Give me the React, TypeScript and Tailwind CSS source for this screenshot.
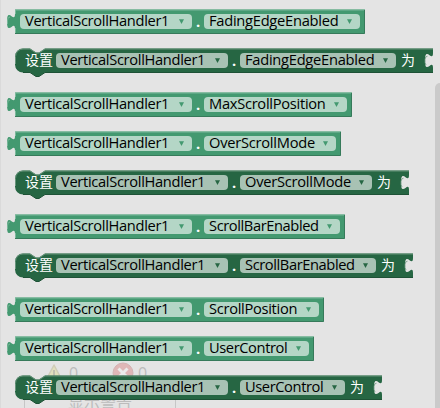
import React from "react";

type Row = { set: boolean; name: string; width: number; mt: string; fit: string; track: string };

const rows: Row[] = [
  { set: false, name: "FadingEdgeEnabled", width: 350, mt: "mt-[9px]", fit: "w-[156px]", track: "tracking-[-0.26px]" },
  { set: true, name: "FadingEdgeEnabled", width: 418, mt: "mt-[14px]", fit: "w-[156px]", track: "tracking-[-0.26px]" },
  { set: false, name: "MaxScrollPosition", width: 337, mt: "mt-[19px]", fit: "w-[143px]", track: "tracking-[-0.28px]" },
  { set: false, name: "OverScrollMode", width: 326, mt: "mt-[14px]", fit: "w-[132px]", track: "tracking-[-0.25px]" },
  { set: true, name: "OverScrollMode", width: 394, mt: "mt-[14px]", fit: "w-[132px]", track: "tracking-[-0.25px]" },
  { set: false, name: "ScrollBarEnabled", width: 330, mt: "mt-[19px]", fit: "w-[136px]", track: "tracking-[-0.4px]" },
  { set: true, name: "ScrollBarEnabled", width: 398, mt: "mt-[14px]", fit: "w-[136px]", track: "tracking-[-0.4px]" },
  { set: false, name: "ScrollPosition", width: 309, mt: "mt-[19px]", fit: "w-[115px]", track: "tracking-[-0.3px]" },
  { set: false, name: "UserControl", width: 299, mt: "mt-[14px]", fit: "w-[105px]", track: "tracking-[-0.4px]" },
  { set: true, name: "UserControl", width: 367, mt: "mt-[14px]", fit: "w-[105px]", track: "tracking-[-0.4px]" },
];

function Shape({ set, width }: { set: boolean; width: number }) {
  const w = width;
  const tab = "v4.5 c0 10 -8 -8 -8 7.5 s8 -2.5 8 7.5";
  const outline = set
    ? `M0 8.5 A8 8 0 0 1 8 .5 H15 l6 4 h3 l6 -4 H${w} ${tab} V24.5 H30 l-6 4 h-3 l-6 -4 H8 A8 8 0 0 1 0 16.5 Z`
    : `M0 .5 ${tab} V24.5 H${w} V.5 Z`;
  return (
    <svg className="absolute left-0 top-0 overflow-visible" width={w} height="25">
      <path d={outline} fill={set ? "#266643" : "#439970"} />
      {set ? (
        <>
          <path d={`M.5 16 V8.5 A7.5 7.5 0 0 1 8 1 H15 l6 4 h3 l6 -4 H${w}`} fill="none" stroke="#67947b" />
          <path d={`M8 24.5 H15 l6 4 h3 l6 -4 H${w}`} fill="none" stroke="#1e5236" />
          <path d={`M${w - 7} 17 q-1.5 -2 -1 -5.5 q.3 -3.5 2.5 -3.3`} fill="none" stroke="#67947b" strokeWidth=".8" />
        </>
      ) : (
        <>
          <path d={`M.5 24 V19 M.5 5 V1 H${w} M-7.5 15 Q-8 8 -5 8`} fill="none" stroke="#7bb89b" />
          <path d={`M0 24.5 H${w - 0.5} V1`} fill="none" stroke="#367a5a" />
        </>
      )}
    </svg>
  );
}

function Field({ text, set, size, track }: { text: string; set: boolean; size: string; track: string }) {
  return (
    <span
      className={`relative flex h-[15px] shrink-0 items-center justify-between rounded-[4px] pl-[5px] pr-[8px] text-black ${size} ${set ? "bg-[#a8c2b4]" : "bg-[#b4d6c6]"}`}
    >
      <span className={`relative -top-px whitespace-nowrap leading-[15px] ${track}`}>{text}</span>
      <svg width="5" height="5" viewBox="0 0 5 5">
        <path d="M0 .3H5L2.5 5Z" fill={set ? "#266643" : "#439970"} />
      </svg>
    </span>
  );
}

function Block({ row }: { row: Row }) {
  return (
    <div className={`relative ml-[15px] flex h-[25px] items-center text-white ${row.mt} ${row.set ? "pl-[10px]" : "pl-[5px]"}`}>
      <Shape set={row.set} width={row.width} />
      {row.set && <span className="relative -top-px w-[31px] shrink-0 whitespace-nowrap text-[14px] leading-[15px]">设置</span>}
      <Field text="VerticalScrollHandler1" set={row.set} size="w-[172px]" track="tracking-[-0.32px]" />
      <span className="relative w-[12px] shrink-0 text-center font-bold leading-[15px]">.</span>
      <Field text={row.name} set={row.set} size={row.fit} track={row.track} />
      {row.set && <span className="relative -top-px ml-[5px] text-[14px] leading-[15px]">为</span>}
    </div>
  );
}

function FadedWarnings() {
  return (
    <div className="absolute left-[24px] top-[361px] h-[47px] w-[152px] text-[#bcbcbc]">
      <div className="flex h-[24px] items-center pl-[20px] text-[16px] leading-[16px]">
        <svg width="20" height="20" viewBox="0 0 20 20">
          <path d="M10 2 18.5 18H1.5Z" fill="#e2e0bd" stroke="#cfcdb8" strokeWidth="1.5" strokeLinejoin="round" />
          <path d="M10 7V13M10 14.5V16.5" stroke="#bdbcae" strokeWidth="1.8" />
        </svg>
        <span className="ml-[5px] w-[19px]">0</span>
        <svg className="ml-[24px]" width="22" height="22" viewBox="0 0 22 22">
          <circle cx="11" cy="11" r="10" fill="#dfb7b7" stroke="#d3b3b3" />
          <path d="M6.5 6.5 15.5 15.5M15.5 6.5 6.5 15.5" stroke="#ececec" strokeWidth="3" />
        </svg>
        <span className="ml-[4px]">0</span>
      </div>
      <div className="flex h-[23px] justify-center border-x border-[#c6c6c6] pt-[9px] text-[16px] leading-[16px]">显示警告</div>
    </div>
  );
}

export default function App() {
  return (
    <div className="relative flex h-[408px] w-[440px] flex-col overflow-hidden bg-[#e4e4e4] font-['Open_Sans','Noto_Sans_CJK_SC',sans-serif] text-[14.67px] shadow-[inset_1px_0_0_#dadada]">
      <FadedWarnings />
      <div className="absolute -right-[5px] top-[83px] h-[340px] w-[10px] rounded-t-[5px] bg-[#cacaca]" />
      <div className="relative flex flex-col">
        {rows.map((row) => (
          <Block key={`${row.set}-${row.name}`} row={row} />
        ))}
      </div>
    </div>
  );
}
